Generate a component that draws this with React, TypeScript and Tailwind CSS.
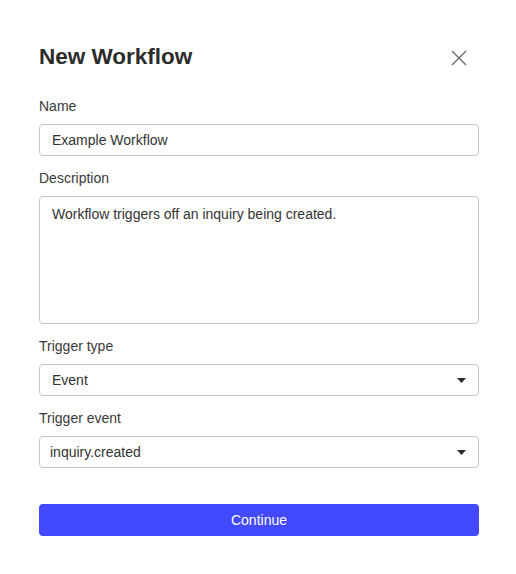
import React from 'react';

const font = { fontFamily: '"Liberation Sans", Arial, sans-serif' };

const Caret = () => (
  <svg width="9" height="5" viewBox="0 0 9 5" className="text-[#2b2b2b]">
    <path d="M0 0h9L4.5 5z" fill="currentColor" />
  </svg>
);

const Label: React.FC<{ children: React.ReactNode }> = ({ children }) => (
  <div className="mb-2 text-[14px] leading-5 text-[#3a3a3a]">{children}</div>
);

const Select: React.FC<{ value: string; pl: string }> = ({ value, pl }) => (
  <div className={`flex h-8 items-center justify-between rounded border border-[#c4c4c4] bg-white pr-[12px] ${pl}`}>
    <span className="text-[14px] text-[#333]">{value}</span>
    <Caret />
  </div>
);

export default function App() {
  return (
    <div style={font} className="h-[574px] w-[516px] bg-white pl-[39px] pr-[37px] pt-[41px] text-[#2b2b2b]">
      <div className="flex items-center justify-between">
        <h1 className="text-[22.5px] font-bold leading-8 text-[#2b2b2b]">New Workflow</h1>
        <button className="mr-[12px] mt-[2px] text-[#6b6b6b]">
          <svg width="16" height="16" viewBox="0 0 16 16" fill="none" stroke="currentColor" strokeWidth="1.4">
            <path d="M1 1l14 14M15 1L1 15" />
          </svg>
        </button>
      </div>

      <div className="mt-[23px]">
        <Label>Name</Label>
        <div className="flex h-8 items-center rounded border border-[#c4c4c4] px-[12px] text-[14px] text-[#333]">
          Example Workflow
        </div>
      </div>

      <div className="mt-[12px]">
        <Label>Description</Label>
        <div className="h-[128px] rounded border border-[#c4c4c4] px-[12px] pt-[7px] text-[14px] leading-5 text-[#333]">
          Workflow triggers off an inquiry being created.
        </div>
      </div>

      <div className="mt-[12px]">
        <Label>Trigger type</Label>
        <Select value="Event" pl="pl-[12px]" />
      </div>

      <div className="mt-[12px]">
        <Label>Trigger event</Label>
        <Select value="inquiry.created" pl="pl-[10px]" />
      </div>

      <button className="mt-[36px] flex h-8 w-full items-center justify-center rounded bg-[#4349ff] text-[14px] text-white">
        Continue
      </button>
    </div>
  );
}
